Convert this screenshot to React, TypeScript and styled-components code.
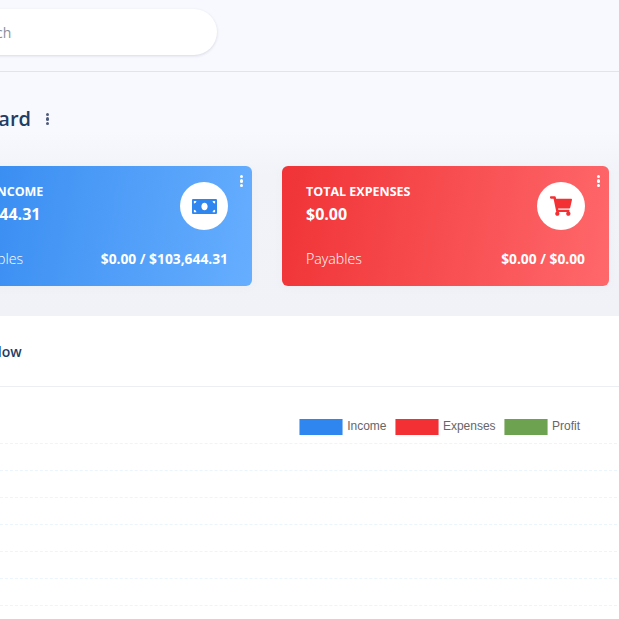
import React from 'react';
import styled, { createGlobalStyle } from 'styled-components';
import { FaMoneyBill, FaShoppingCart } from 'react-icons/fa';

const GlobalStyle = createGlobalStyle`
  html, body {
    margin: 0;
    height: 100%;
    overflow: hidden;
    background: #fff;
    font-family: "Open Sans", sans-serif;
  }
`;

const Page = styled.div`
  width: 724px;
  margin-left: -105px;
`;

const Topbar = styled.header`
  box-sizing: border-box;
  height: 72px;
  padding-top: 9px;
  background: #f8f9fe;
  border-bottom: 1px solid #e2e4ea;
`;

const SearchBox = styled.div`
  box-sizing: border-box;
  width: 322px;
  height: 46px;
  padding-left: 72px;
  display: flex;
  align-items: center;
  background: #fff;
  border-radius: 23px;
  box-shadow: 0 1px 3px rgba(50, 50, 93, 0.16);
  font-size: 14px;
  color: #8a8f9c;
`;

const Hero = styled.section`
  box-sizing: border-box;
  height: 244px;
  padding: 33px 0 0 30px;
  background: linear-gradient(180deg, #f8f9fe 0%, #f8f9fe 24%, #f1f3f8 42%, #f0f2f8 100%);
`;

const TitleRow = styled.div`
  display: flex;
  align-items: center;
  gap: 15px;
  height: 28px;
`;

const Title = styled.h1`
  margin: 0;
  font-size: 20px;
  font-weight: 600;
  line-height: 28px;
  color: #1f3d66;
`;

const Dots = styled.span<{ $color: string }>`
  display: flex;
  flex-direction: column;
  gap: 1px;
  i {
    display: block;
    width: 3.3px;
    height: 3.3px;
    border-radius: 50%;
    background: ${(p) => p.$color};
  }
`;

const Cards = styled.div`
  display: flex;
  gap: 30px;
  margin-top: 33px;
`;

const Card = styled.div<{ $from: string; $to: string }>`
  position: relative;
  flex: none;
  box-sizing: border-box;
  width: 327px;
  height: 120px;
  padding: 17px 24px 0;
  border-radius: 6px;
  color: #fff;
  background: linear-gradient(100deg, ${(p) => p.$from}, ${(p) => p.$to});
  box-shadow: 0 2px 8px rgba(140, 152, 164, 0.04);
`;

const CardTop = styled.div`
  display: flex;
  justify-content: space-between;
  height: 47px;
`;

const CardLabel = styled.div`
  font-size: 12.5px;
  font-weight: 700;
  line-height: 18px;
`;

const CardAmount = styled.div`
  margin-top: 2px;
  font-size: 16px;
  font-weight: 700;
  line-height: 22px;
`;

const IconCircle = styled.div<{ $color: string }>`
  flex: none;
  width: 48px;
  height: 48px;
  margin-top: -1px;
  border-radius: 50%;
  background: #fff;
  color: ${(p) => p.$color};
  display: flex;
  align-items: center;
  justify-content: center;
`;

const CardBottom = styled.div`
  display: flex;
  justify-content: space-between;
  align-items: center;
  margin-top: 18px;
  height: 20px;
  font-size: 14.2px;
  font-weight: 300;
`;

const CardRatio = styled.span`
  font-size: 13.8px;
  font-weight: 700;
`;

const CardMenu = styled.div`
  position: absolute;
  top: 9px;
  right: 9px;
`;

const Panel = styled.section`
  background: #fff;
`;

const PanelHeader = styled.div`
  box-sizing: border-box;
  height: 71px;
  padding-left: 59px;
  display: flex;
  align-items: center;
  border-bottom: 1px solid #ebeef2;
  font-size: 14px;
  font-weight: 600;
  color: #1f3d66;
`;

const Chart = styled.div`
  padding: 32px 2px 0 0;
`;

const Legend = styled.div`
  display: flex;
  justify-content: flex-end;
  height: 24px;
  padding-right: 37px;
  font-family: "Liberation Sans", Arial, sans-serif;
  font-size: 12px;
  color: #666;
`;

const LegendItem = styled.div`
  display: flex;
  align-items: flex-start;
  gap: 4px;
  margin-left: 8px;
  line-height: 14px;
`;

const Swatch = styled.span<{ $color: string; $edge: string }>`
  box-sizing: border-box;
  width: 44.4px;
  height: 16px;
  background: ${(p) => p.$color};
  border-left: 1px solid ${(p) => p.$edge};
  border-right: 1px solid ${(p) => p.$edge};
`;

const GridLine = styled.div`
  height: 27px;
  box-sizing: border-box;
  border-top: 1px dashed #ebf5fc;
`;

const legend = [
  { name: 'Income', color: '#2f86ee', edge: '#8fbdf5' },
  { name: 'Expenses', color: '#f33134', edge: '#f88b8d' },
  { name: 'Profit', color: '#6da250', edge: '#adc99c' },
];

const Menu = ({ color }: { color: string }) => (
  <Dots $color={color}>
    <i />
    <i />
    <i />
  </Dots>
);

export default function App() {
  return (
    <Page>
      <GlobalStyle />
      <Topbar>
        <SearchBox>Search</SearchBox>
      </Topbar>
      <Hero>
        <TitleRow>
          <Title>Dashboard</Title>
          <Menu color="#4f5b7c" />
        </TitleRow>
        <Cards>
          <Card $from="#2f86ee" $to="#66aeff">
            <CardMenu><Menu color="#fff" /></CardMenu>
            <CardTop>
              <div>
                <CardLabel>TOTAL INCOME</CardLabel>
                <CardAmount>$103,644.31</CardAmount>
              </div>
              <IconCircle $color="#2f86ee"><FaMoneyBill size={25} /></IconCircle>
            </CardTop>
            <CardBottom>
              <span>Receivables</span>
              <CardRatio>$0.00 / $103,644.31</CardRatio>
            </CardBottom>
          </Card>
          <Card $from="#f03336" $to="#ff686b">
            <CardMenu><Menu color="#fff" /></CardMenu>
            <CardTop>
              <div>
                <CardLabel>TOTAL EXPENSES</CardLabel>
                <CardAmount>$0.00</CardAmount>
              </div>
              <IconCircle $color="#f33134"><FaShoppingCart size={22} /></IconCircle>
            </CardTop>
            <CardBottom>
              <span>Payables</span>
              <CardRatio>$0.00 / $0.00</CardRatio>
            </CardBottom>
          </Card>
        </Cards>
      </Hero>
      <Panel>
        <PanelHeader>Cash Flow</PanelHeader>
        <Chart>
          <Legend>
            {legend.map((item) => (
              <LegendItem key={item.name}>
                <Swatch $color={item.color} $edge={item.edge} />
                {item.name}
              </LegendItem>
            ))}
          </Legend>
          {Array.from({ length: 7 }).map((_, i) => (
            <GridLine key={i} />
          ))}
        </Chart>
      </Panel>
    </Page>
  );
}
